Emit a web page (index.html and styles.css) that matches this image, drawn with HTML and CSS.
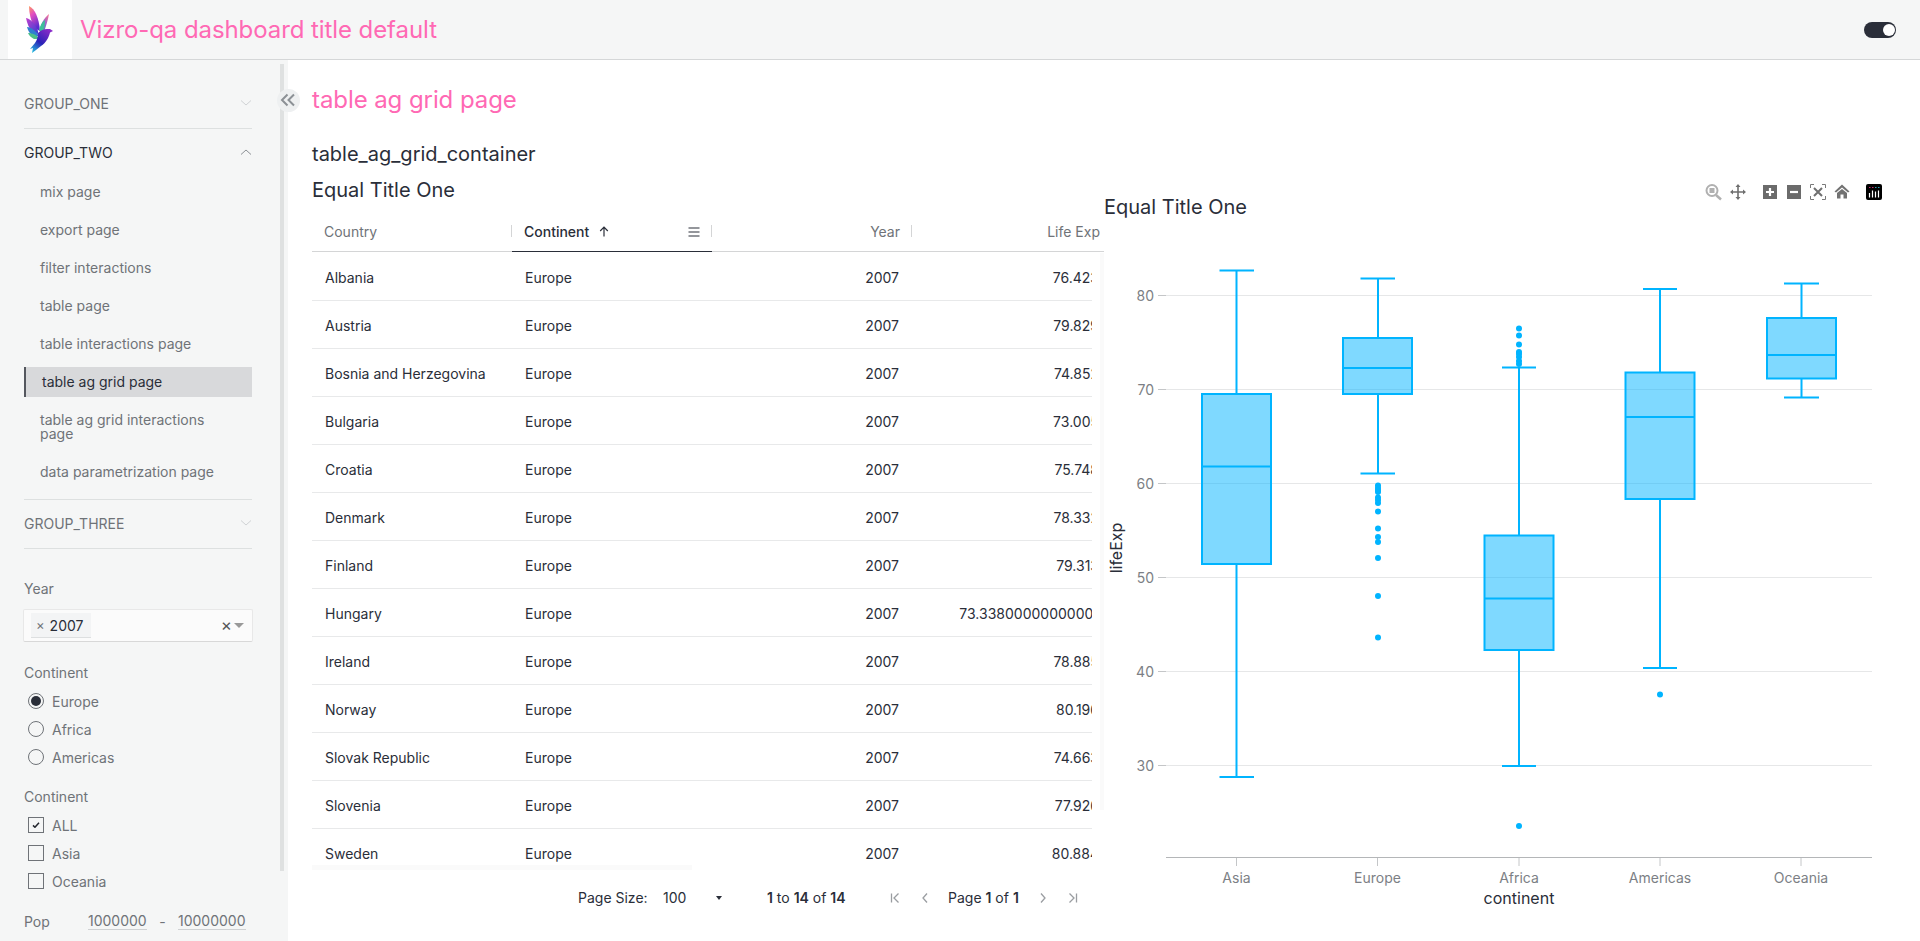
FILE: index.html
```html
<!DOCTYPE html>
<html>
<head>
    <title>table ag grid page</title>
    <link rel="stylesheet" href="styles.css">
</head>
<body>
    <header class="top-bar">
        <div class="logo">
            <svg width="64" height="59" viewBox="0 0 64 59">
                <defs>
                    <linearGradient id="wingA" x1="0" y1="0" x2="0.4" y2="1">
                        <stop offset="0" stop-color="#ff9a5c"/>
                        <stop offset="0.4" stop-color="#e24fc0"/>
                        <stop offset="1" stop-color="#5a2bd0"/>
                    </linearGradient>
                    <linearGradient id="wingB" x1="0.8" y1="0" x2="0.2" y2="1">
                        <stop offset="0" stop-color="#f0709a"/>
                        <stop offset="0.5" stop-color="#9a5fd0"/>
                        <stop offset="1" stop-color="#2aa7a0"/>
                    </linearGradient>
                    <linearGradient id="wingC" x1="0" y1="0" x2="1" y2="1">
                        <stop offset="0" stop-color="#c23fd0"/>
                        <stop offset="1" stop-color="#3a3fd0"/>
                    </linearGradient>
                    <linearGradient id="bodyA" x1="0.8" y1="0" x2="0.1" y2="1">
                        <stop offset="0" stop-color="#8a2bc8"/>
                        <stop offset="0.55" stop-color="#2a22b8"/>
                        <stop offset="1" stop-color="#25c5e0"/>
                    </linearGradient>
                </defs>
                <path d="M21 6 C27 9 31 18 32 31 L26 28 C23 21 21 13 21 6Z" fill="url(#wingA)"/>
                <path d="M18 18 C23 19 27 24 30 31 L30 34 L24 32 C21 28 19 23 18 18Z" fill="url(#wingC)"/>
                <path d="M19 27 C23 27 28 31 31 36 L25 36 C22 34 20 31 19 27Z" fill="#2f7fd0"/>
                <path d="M20 33 C24 33 29 35 32 39 L26 39 C24 38 21 36 20 33Z" fill="#4cc08a"/>
                <path d="M41 14 C40 20 38 26 36 32 L32 31 C32 25 36 18 41 14Z" fill="url(#wingB)"/>
                <path d="M37 20 C37 25 36 29 34 33 L31 30 C32 26 34 22 37 20Z" fill="#3cbf9a"/>
                <path d="M30 33 C33 30 36 29 39 29 L42 29 L45 31 L42 32.5 C41 37 38 43 33 46 L28 50 L24 53 L25 48 L22 49 L27 43 C29 40 30 37 30 33Z" fill="url(#bodyA)"/>
            </svg>
        </div>
        <div class="dash-title">Vizro-qa dashboard title default</div>
        <div class="toggle"><span class="toggle-knob"></span></div>
    </header>

    <div class="page">
        <aside class="sidebar">
            <nav class="accordion">
                <div class="group">
                    <span>GROUP_ONE</span>
                    <svg class="chev" width="12" height="6" viewBox="0 0 12 6"><path d="M1 0.5 L6 5 L11 0.5"/></svg>
                </div>
                <div class="group group-open">
                    <span>GROUP_TWO</span>
                    <svg class="chev chev-open" width="12" height="6" viewBox="0 0 12 6"><path d="M1 5.5 L6 1 L11 5.5"/></svg>
                </div>
                <div class="pages">
                    <a class="nav-link">mix page</a>
                    <a class="nav-link">export page</a>
                    <a class="nav-link">filter interactions</a>
                    <a class="nav-link">table page</a>
                    <a class="nav-link">table interactions page</a>
                    <a class="nav-link nav-active">table ag grid page</a>
                    <a class="nav-link nav-wrap">table ag grid interactions page</a>
                    <a class="nav-link">data parametrization page</a>
                </div>
                <div class="group group-last">
                    <span>GROUP_THREE</span>
                    <svg class="chev" width="12" height="6" viewBox="0 0 12 6"><path d="M1 0.5 L6 5 L11 0.5"/></svg>
                </div>
            </nav>

            <div class="controls">
                <div class="ctl-label">Year</div>
                <div class="dropdown">
                    <span class="chip"><span class="chip-x">×</span>2007</span>
                    <span class="dd-clear">×</span>
                    <span class="dd-caret"></span>
                </div>

                <div class="ctl-label ctl-gap">Continent</div>
                <div class="opt"><span class="radio radio-on"></span>Europe</div>
                <div class="opt"><span class="radio"></span>Africa</div>
                <div class="opt"><span class="radio"></span>Americas</div>

                <div class="ctl-label ctl-gap2">Continent</div>
                <div class="opt">
                    <span class="check">
                        <svg width="8" height="6" viewBox="0 0 10 8"><path d="M1 4.5 L3.6 7 L9 1" fill="none" stroke="#23262e" stroke-width="2"/></svg>
                    </span>ALL
                </div>
                <div class="opt"><span class="check"></span>Asia</div>
                <div class="opt"><span class="check"></span>Oceania</div>

                <div class="range">
                    <span class="range-label">Pop</span>
                    <span class="range-in">1000000</span>
                    <span class="range-dash">-</span>
                    <span class="range-in range-in2">10000000</span>
                </div>
            </div>
        </aside>
        <div class="side-scroll"></div>
        <button class="collapse">
            <svg width="16" height="14" viewBox="0 0 16 14"><path d="M7.5 1.5 L2 7 L7.5 12.5 M14 1.5 L8.5 7 L14 12.5"/></svg>
        </button>

        <main class="main">
            <h1 class="page-title">table ag grid page</h1>
            <div class="content">
                <section class="table-col">
                    <h3 class="container-title">table_ag_grid_container</h3>
                    <h3 class="table-title">Equal Title One</h3>

                    <div class="grid-head">
                        <div class="hcell hcell-country">Country</div>
                        <div class="hcell hcell-sorted">
                            <span>Continent</span>
                            <svg class="sort-arrow" width="10" height="11" viewBox="0 0 10 11"><path d="M5 10.5 V1.5 M1.2 5 L5 1.2 L8.8 5"/></svg>
                            <svg class="col-menu" width="12" height="10" viewBox="0 0 12 10"><path d="M0.5 1 H11.5 M0.5 5 H11.5 M0.5 9 H11.5"/></svg>
                        </div>
                        <div class="hcell hcell-num">Year</div>
                        <div class="hcell hcell-num hcell-last">Life Exp</div>
                    </div>

                    <div class="grid-body">
                        <div class="row"><div class="cell">Albania</div><div class="cell">Europe</div><div class="cell cell-num">2007</div><div class="cell cell-num">76.423</div></div>
                        <div class="row"><div class="cell">Austria</div><div class="cell">Europe</div><div class="cell cell-num">2007</div><div class="cell cell-num">79.829</div></div>
                        <div class="row"><div class="cell">Bosnia and Herzegovina</div><div class="cell">Europe</div><div class="cell cell-num">2007</div><div class="cell cell-num">74.852</div></div>
                        <div class="row"><div class="cell">Bulgaria</div><div class="cell">Europe</div><div class="cell cell-num">2007</div><div class="cell cell-num">73.005</div></div>
                        <div class="row"><div class="cell">Croatia</div><div class="cell">Europe</div><div class="cell cell-num">2007</div><div class="cell cell-num">75.748</div></div>
                        <div class="row"><div class="cell">Denmark</div><div class="cell">Europe</div><div class="cell cell-num">2007</div><div class="cell cell-num">78.332</div></div>
                        <div class="row"><div class="cell">Finland</div><div class="cell">Europe</div><div class="cell cell-num">2007</div><div class="cell cell-num">79.313</div></div>
                        <div class="row"><div class="cell">Hungary</div><div class="cell">Europe</div><div class="cell cell-num">2007</div><div class="cell cell-num">73.33800000000001</div></div>
                        <div class="row"><div class="cell">Ireland</div><div class="cell">Europe</div><div class="cell cell-num">2007</div><div class="cell cell-num">78.885</div></div>
                        <div class="row"><div class="cell">Norway</div><div class="cell">Europe</div><div class="cell cell-num">2007</div><div class="cell cell-num">80.196</div></div>
                        <div class="row"><div class="cell">Slovak Republic</div><div class="cell">Europe</div><div class="cell cell-num">2007</div><div class="cell cell-num">74.663</div></div>
                        <div class="row"><div class="cell">Slovenia</div><div class="cell">Europe</div><div class="cell cell-num">2007</div><div class="cell cell-num">77.926</div></div>
                        <div class="row"><div class="cell">Sweden</div><div class="cell">Europe</div><div class="cell cell-num">2007</div><div class="cell cell-num">80.884</div></div>
                        <div class="hscroll"></div>
                        <div class="vscroll"></div>
                    </div>

                    <div class="pager">
                        <span>Page Size:</span>
                        <span class="pg-size">100</span>
                        <span class="pg-caret"></span>
                        <span class="pg-count"><b>1</b> to <b>14</b> of <b>14</b></span>
                        <svg class="pg-icon pg-first" width="10" height="10" viewBox="0 0 10 10"><path d="M1.5 0.5 V9.5 M8.5 0.5 L4 5 L8.5 9.5"/></svg>
                        <svg class="pg-icon pg-prev" width="6" height="10" viewBox="0 0 6 10"><path d="M5 0.5 L1 5 L5 9.5"/></svg>
                        <span class="pg-page">Page <b>1</b> of <b>1</b></span>
                        <svg class="pg-icon pg-next" width="6" height="10" viewBox="0 0 6 10"><path d="M1 0.5 L5 5 L1 9.5"/></svg>
                        <svg class="pg-icon pg-last" width="10" height="10" viewBox="0 0 10 10"><path d="M8.5 0.5 V9.5 M1.5 0.5 L6 5 L1.5 9.5"/></svg>
                    </div>
                </section>

                <section class="chart-col">
                    <svg class="chart" width="816" height="769" viewBox="1104 172 816 769">
                        <text class="chart-title" x="1104" y="214">Equal Title One</text>

                        <!-- modebar -->
                        <g class="mb">
                            <circle cx="1712" cy="190.5" r="5.5" fill="none" stroke="#b0b0b0" stroke-width="2"/>
                            <rect x="1709.5" y="188" width="5" height="5" fill="#b0b0b0"/>
                            <path d="M1716 195 L1721 199.5" stroke="#b0b0b0" stroke-width="2.5"/>
                            <path d="M1738 186 V198 M1732 192 H1744" stroke="#6f6f6f" stroke-width="1.6"/>
                            <path d="M1738 184 L1740.5 187 H1735.5Z M1738 200 L1740.5 197 H1735.5Z M1730 192 L1733 189.5 V194.5Z M1746 192 L1743 189.5 V194.5Z" fill="#6f6f6f"/>
                            <rect x="1763" y="185" width="14" height="14" fill="#6b6b6b"/>
                            <path d="M1770 188 V196 M1766 192 H1774" stroke="#fff" stroke-width="2.2"/>
                            <rect x="1787" y="185" width="14" height="14" fill="#6b6b6b"/>
                            <path d="M1790 192 H1798" stroke="#fff" stroke-width="2.2"/>
                            <path d="M1810.5 188 V184.5 H1814 M1822 184.5 H1825.5 V188 M1825.5 196 V199.5 H1822 M1814 199.5 H1810.5 V196" fill="none" stroke="#7a7a7a" stroke-width="1"/>
                            <path d="M1814 188 L1822 196 M1822 188 L1814 196" stroke="#6f6f6f" stroke-width="2"/>
                            <path d="M1842 184.5 L1849.5 191.5 L1848 192.5 L1842 187.5 L1836 192.5 L1834.5 191.5Z M1837 193 L1842 189 L1847 193 V198.5 H1843.5 V194.5 H1840.5 V198.5 H1837Z" fill="#727272"/>
                            <rect x="1866" y="184" width="16" height="16" rx="2" fill="#000"/>
                            <path d="M1869.5 193 V197.5 M1872.5 190.5 V197.5 M1875.5 191.5 V197.5 M1878.5 190.5 V197.5" stroke="#fff" stroke-width="1.2"/>
                            <path d="M1869 187.5 H1870.5 M1872 187.5 H1873.5" stroke="#c82a6e" stroke-width="1.2"/>
                            <path d="M1875 187.5 H1876.5 M1878 187.5 H1879.5" stroke="#2f9fb4" stroke-width="1.2"/>
                        </g>

                        <!-- grid -->
                        <g class="grid-lines">
                            <path d="M1166 295.5 H1872 M1166 389.5 H1872 M1166 483.5 H1872 M1166 577.5 H1872 M1166 671.5 H1872 M1166 765.5 H1872"/>
                        </g>
                        <g class="ticks">
                            <path d="M1158 295.5 H1166 M1158 389.5 H1166 M1158 483.5 H1166 M1158 577.5 H1166 M1158 671.5 H1166 M1158 765.5 H1166"/>
                            <path d="M1236.5 857 V866 M1377.5 857 V866 M1519 857 V866 M1660 857 V866 M1801 857 V866"/>
                        </g>
                        <path class="x-axis" d="M1166 857.5 H1872"/>

                        <g class="tick-y">
                            <text x="1154" y="300.5">80</text>
                            <text x="1154" y="394.5">70</text>
                            <text x="1154" y="488.5">60</text>
                            <text x="1154" y="582.5">50</text>
                            <text x="1154" y="676.5">40</text>
                            <text x="1154" y="770.5">30</text>
                        </g>
                        <g class="tick-x">
                            <text x="1236.5" y="883">Asia</text>
                            <text x="1377.5" y="883">Europe</text>
                            <text x="1519" y="883">Africa</text>
                            <text x="1660" y="883">Americas</text>
                            <text x="1801" y="883">Oceania</text>
                        </g>
                        <text class="axis-title" x="1519" y="904">continent</text>
                        <text class="axis-title" transform="translate(1122 548) rotate(-90)">lifeExp</text>

                        <!-- Asia -->
                        <g class="box">
                            <path d="M1236.5 270.5 V394 M1236.5 564 V777 M1219.5 270.5 H1254 M1219.5 777 H1254"/>
                            <rect x="1202" y="394" width="69" height="170"/>
                            <path d="M1202 466.5 H1271"/>
                        </g>
                        <!-- Europe -->
                        <g class="box">
                            <path d="M1378 278.5 V338 M1378 394 V473.5 M1360.5 278.5 H1395 M1360.5 473.5 H1395"/>
                            <rect x="1343" y="338" width="69" height="56"/>
                            <path d="M1343 368 H1412"/>
                        </g>
                        <g class="pts">
                            <circle cx="1378" cy="485.5" r="3"/><circle cx="1378" cy="488" r="3"/><circle cx="1378" cy="490" r="3"/><circle cx="1378" cy="492" r="3"/>
                            <circle cx="1378" cy="497.5" r="3"/><circle cx="1378" cy="500" r="3"/><circle cx="1378" cy="503" r="3"/><circle cx="1378" cy="511.5" r="3"/>
                            <circle cx="1378" cy="528.5" r="3"/><circle cx="1378" cy="537" r="3"/><circle cx="1378" cy="542" r="3"/><circle cx="1378" cy="558" r="3"/>
                            <circle cx="1378" cy="596" r="3"/><circle cx="1378" cy="637.5" r="3"/>
                        </g>
                        <!-- Africa -->
                        <g class="box">
                            <path d="M1519 367.5 V535.5 M1519 650 V766 M1502 367.5 H1536 M1502 766 H1536"/>
                            <rect x="1484.5" y="535.5" width="69" height="114.5"/>
                            <path d="M1484.5 598.5 H1553.5"/>
                        </g>
                        <g class="pts">
                            <circle cx="1519" cy="328.5" r="3"/><circle cx="1519" cy="335.5" r="3"/><circle cx="1519" cy="344.5" r="3"/><circle cx="1519" cy="352" r="3"/>
                            <circle cx="1519" cy="354" r="3"/><circle cx="1519" cy="357" r="3"/><circle cx="1519" cy="361" r="3"/><circle cx="1519" cy="364" r="3"/>
                            <circle cx="1519" cy="826" r="3"/>
                        </g>
                        <!-- Americas -->
                        <g class="box">
                            <path d="M1660 289 V372.5 M1660 499 V668 M1643 289 H1677 M1643 668 H1677"/>
                            <rect x="1625.5" y="372.5" width="69" height="126.5"/>
                            <path d="M1625.5 417 H1694.5"/>
                        </g>
                        <g class="pts"><circle cx="1660" cy="694.5" r="3"/></g>
                        <!-- Oceania -->
                        <g class="box">
                            <path d="M1801.5 283.5 V318 M1801.5 378.5 V397.5 M1784 283.5 H1819 M1784 397.5 H1819"/>
                            <rect x="1767" y="318" width="69" height="60.5"/>
                            <path d="M1767 355 H1836"/>
                        </g>
                    </svg>
                </section>
            </div>
        </main>
    </div>
</body>
</html>
```

FILE: styles.css
```css
* {
    box-sizing: border-box;
}

html,
body {
    height: 941px;
    overflow: hidden;
}

body {
    margin: 0;
    font-family: Inter, "Noto Sans", sans-serif;
    font-size: 14px;
    color: #2a2e39;
    background-color: #fff;
}

/* top bar */
.top-bar {
    display: flex;
    align-items: center;
    height: 60px;
    padding-left: 8px;
    padding-right: 24px;
    background-color: #f5f6f6;
    border-bottom: 1px solid #d5d7d8;
}

.logo {
    width: 64px;
    height: 59px;
    background-color: #fff;
}

.logo svg {
    display: block;
}

.dash-title {
    flex: 1;
    margin-left: 8px;
    font-size: 24px;
    letter-spacing: -0.08px;
    color: #ff69b4;
}

.toggle {
    position: relative;
    width: 32px;
    height: 16px;
    border-radius: 8px;
    background-color: #2a2e39;
}

.toggle-knob {
    position: absolute;
    top: 2px;
    right: 1.5px;
    width: 12px;
    height: 12px;
    border-radius: 50%;
    background-color: #fff;
}

/* sidebar */
.page {
    position: relative;
    display: flex;
    height: 881px;
}

.sidebar {
    width: 288px;
    flex-shrink: 0;
    padding: 20px 36px 0 24px;
    background-color: #f5f6f6;
    overflow: hidden;
    color: #6f7378;
}

.side-scroll {
    position: absolute;
    left: 280px;
    top: 4px;
    width: 4px;
    height: 807px;
    background-color: #dfe1e1;
}

.collapse {
    position: absolute;
    left: 276.5px;
    top: 28.5px;
    width: 23px;
    height: 23px;
    padding: 0;
    border: none;
    border-radius: 50%;
    background-color: #eef0f1;
    display: flex;
    align-items: center;
    justify-content: center;
}

.collapse path {
    fill: none;
    stroke: #8c9196;
    stroke-width: 2;
}

.group {
    display: flex;
    align-items: center;
    justify-content: space-between;
    height: 49px;
    padding-bottom: 2px;
    border-bottom: 1px solid #dde0e0;
}

.group-open {
    height: 48px;
    color: #2a2e39;
    border-bottom: none;
}

.chev path {
    fill: none;
    stroke: #cfd2d4;
    stroke-width: 1;
}

.chev-open path {
    stroke: #8c9196;
}

.pages {
    display: flex;
    flex-direction: column;
    padding-bottom: 4px;
    border-bottom: 1px solid #dde0e0;
}

.nav-link {
    display: flex;
    align-items: center;
    height: 30px;
    margin-bottom: 8px;
    padding-left: 16px;
    padding-right: 32px;
    padding-bottom: 2px;
}

.nav-active {
    padding-left: 16px;
    color: #2a2e39;
    background-color: #d8d9db;
    border-left: 2px solid #54575e;
}

.nav-wrap {
    height: 44px;
    padding-bottom: 0;
    line-height: 14px;
}

.controls {
    padding-top: 31px;
}

.ctl-label {
    line-height: 17px;
}

.ctl-gap {
    margin-top: 22px;
    margin-bottom: 6px;
}

.ctl-gap2 {
    margin-top: 17px;
    margin-bottom: 6px;
}

.dropdown {
    display: flex;
    align-items: center;
    height: 33px;
    margin: 12px -1px 0;
    padding-left: 7px;
    background-color: #fbfbfb;
    border: 1px solid #e8e8e8;
    border-bottom-color: #d8d8d8;
    border-radius: 2px;
}

.chip {
    display: flex;
    align-items: center;
    width: 60px;
    height: 25px;
    padding-left: 5px;
    color: #2a2e39;
    background-color: #f3f4f5;
    border-bottom: 1px solid #dddfe0;
}

.chip-x {
    margin-right: 5px;
    color: #6f7378;
    font-size: 13px;
}

.dd-clear {
    margin-left: auto;
    font-size: 17px;
    line-height: 1;
    color: #555;
}

.dd-caret {
    margin: 0 8px 0 2px;
    border-top: 5px solid #999;
    border-left: 5px solid transparent;
    border-right: 5px solid transparent;
}

.opt {
    display: flex;
    align-items: center;
    height: 28px;
    padding-left: 4px;
}

.radio {
    display: flex;
    align-items: center;
    justify-content: center;
    width: 16px;
    height: 16px;
    margin-right: 8px;
    border: 1px solid #6f7378;
    border-radius: 50%;
}

.radio-on::after {
    content: "";
    width: 10px;
    height: 10px;
    border-radius: 50%;
    background-color: #2a2e39;
}

.check {
    display: flex;
    align-items: center;
    justify-content: center;
    width: 16px;
    height: 16px;
    margin-right: 8px;
    border: 1px solid #6f7378;
}

.range {
    display: flex;
    align-items: center;
    margin-top: 17px;
}

.range-label {
    width: 64px;
}

.range-in {
    width: 59px;
    border-bottom: 1px solid #cfd1d3;
}

.range-dash {
    width: 31px;
    text-align: center;
}

.range-in2 {
    width: 68px;
}

/* main area */
.main {
    flex: 1;
    padding: 24px 0 0 24px;
    min-width: 0;
}

.page-title {
    margin: 0 0 26px;
    font-size: 24px;
    font-weight: 400;
    line-height: 32px;
    letter-spacing: -0.08px;
    color: #ff69b4;
}

.content {
    display: flex;
}

.table-col {
    width: 792px;
    flex-shrink: 0;
}

.container-title,
.table-title {
    margin: 0;
    font-size: 20px;
    font-weight: 400;
    line-height: 24px;
    color: #2a2e39;
}

.table-title {
    margin-top: 12px;
}

.grid-head {
    display: flex;
    height: 40px;
    margin-top: 10px;
    border-bottom: 1px solid #d4d5d6;
    color: #6f7378;
}

.hcell {
    position: relative;
    display: flex;
    align-items: center;
    flex-shrink: 0;
    width: 200px;
    height: 39px;
    padding: 0 12px;
}

.hcell::after {
    content: "";
    position: absolute;
    right: 0;
    top: 13px;
    width: 1px;
    height: 12px;
    background-color: #d4d5d6;
}

.hcell-sorted {
    color: #2a2e39;
    font-weight: 500;
    height: 40px;
    border-bottom: 1px solid #2a2e39;
}

.hcell-num {
    justify-content: flex-end;
}

.sort-arrow {
    margin-left: 10px;
}

.sort-arrow path,
.col-menu path {
    fill: none;
    stroke: #2a2e39;
    stroke-width: 1.2;
}

.col-menu {
    margin-left: auto;
}

.hcell-last {
    width: 188px;
    padding-right: 0;
}

.hcell-last::after {
    display: none;
}

.grid-body {
    position: relative;
    width: 792px;
    height: 617px;
    margin-top: 1px;
    overflow: hidden;
}

.row {
    display: flex;
    width: 780px;
    height: 48px;
    border-bottom: 1px solid #e8e9ea;
    overflow: hidden;
}

.cell {
    flex-shrink: 0;
    width: 200px;
    padding: 0 12px 0 13px;
    line-height: 49px;
    white-space: nowrap;
}

.cell-num {
    display: flex;
    justify-content: flex-end;
    padding: 0 13px 0 0;
}

.hscroll {
    position: absolute;
    left: 0;
    bottom: 0;
    width: 380px;
    height: 5px;
    background-color: #fafafa;
}

.vscroll {
    position: absolute;
    right: 0;
    top: 0;
    width: 4px;
    height: 557px;
    background-color: #fafafa;
}

.pager {
    position: relative;
    height: 56px;
    line-height: 56px;
    color: #2a2e39;
}

.pager > * {
    position: absolute;
}

.pager b {
    font-weight: 600;
}

.pager > span:first-child {
    left: 266px;
}

.pg-size {
    left: 351px;
}

.pg-caret {
    left: 404px;
    top: 26px;
    border-top: 4px solid #2a2e39;
    border-left: 3.5px solid transparent;
    border-right: 3.5px solid transparent;
}

.pg-count {
    left: 455px;
}

.pg-page {
    left: 636px;
}

.pg-icon {
    top: 23px;
}

.pg-icon path {
    fill: none;
    stroke: #9a9da1;
    stroke-width: 1.3;
}

.pg-first {
    left: 578px;
}

.pg-prev {
    left: 610px;
}

.pg-next {
    left: 728px;
}

.pg-last {
    left: 756px;
}

/* chart */
.chart-col {
    margin-top: 30px;
}

.chart {
    display: block;
    font-family: Inter, "Noto Sans", sans-serif;
}

.chart-title {
    font-size: 20px;
    fill: #2a2e39;
}

.grid-lines path {
    fill: none;
    stroke: #e6e7e8;
    stroke-width: 1;
}

.ticks path {
    fill: none;
    stroke: #c4c6c8;
    stroke-width: 1;
}

.x-axis {
    fill: none;
    stroke: #b4b6b8;
    stroke-width: 1;
}

.tick-y text {
    font-size: 14px;
    fill: #7c7f85;
    text-anchor: end;
}

.tick-x text {
    font-size: 14px;
    fill: #7c7f85;
    text-anchor: middle;
}

.axis-title {
    font-size: 16px;
    fill: #2a2e39;
    text-anchor: middle;
}

.box path {
    fill: none;
    stroke: #00b4ff;
    stroke-width: 2;
}

.box rect {
    fill: rgba(0, 180, 255, 0.5);
    stroke: #00b4ff;
    stroke-width: 2;
}

.pts circle {
    fill: #00b4ff;
}
```
